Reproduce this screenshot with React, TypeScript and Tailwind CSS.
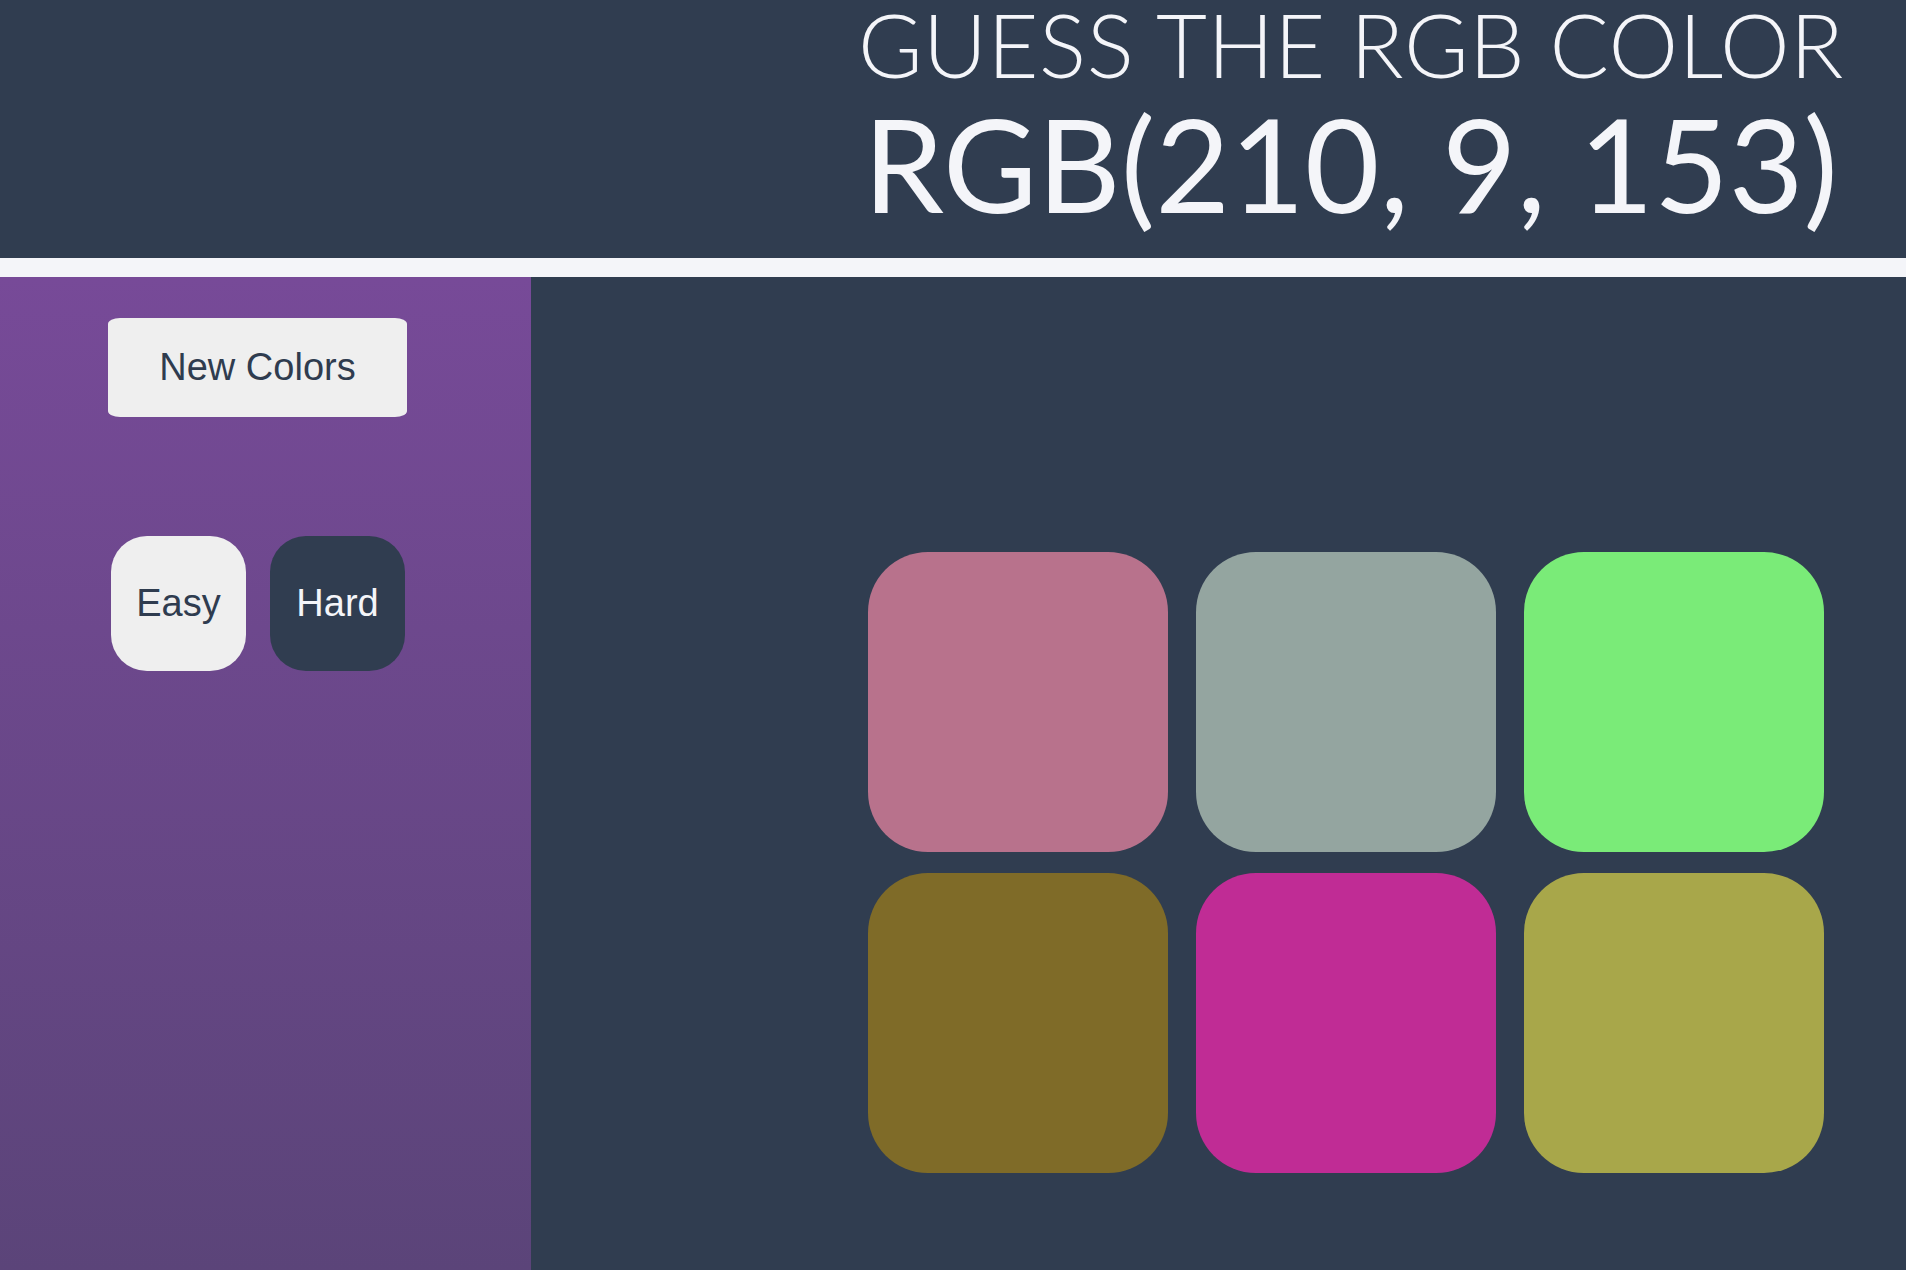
import React from 'react';

const squares = ['#b8728c', '#94a5a0', '#7aeb78', '#7f6b28', '#c02c95', '#a8a74a'];

export default function App() {
  return (
    <div className="w-[1906px] h-[1270px] flex flex-col bg-[#303d50] overflow-hidden">
      <header className="h-[258px] flex flex-col items-end pr-[62px] text-[#f4f5f9] font-['Lato',sans-serif]">
        <h1 className="text-[88px] font-light leading-none tracking-[0.5px]">GUESS THE RGB COLOR</h1>
        <h2 className="text-[129px] font-normal leading-none mt-[11px] mr-[6px]">RGB(210, 9, 153)</h2>
      </header>
      <div className="h-[19px] bg-[#f4f5f9]" />
      <div className="flex flex-1">
        <aside className="w-[531px] bg-gradient-to-b from-[#774a98] to-[#5b4479] pt-[41px] pl-[108px] font-['Liberation_Sans',Arial,sans-serif]">
          <button className="w-[299px] h-[99px] bg-[#efefef] text-[#2f3c4f] text-[38px] rounded-[12px/6px]">New Colors</button>
          <div className="flex gap-[24px] mt-[119px] ml-[3px]">
            <button className="w-[135px] h-[135px] rounded-[36px] bg-[#efefef] text-[#2f3c4f] text-[38px]">Easy</button>
            <button className="w-[135px] h-[135px] rounded-[36px] bg-[#303d50] text-[#f4f5f9] text-[38px]">Hard</button>
          </div>
        </aside>
        <main className="flex-1 pl-[337px] pt-[275px]">
          <div className="grid grid-cols-[300px_300px_300px] gap-x-[28px] gap-y-[21px]">
            {squares.map(c => (
              <div key={c} className="w-[300px] h-[300px] rounded-[60px]" style={{ backgroundColor: c }} />
            ))}
          </div>
        </main>
      </div>
    </div>
  );
}
